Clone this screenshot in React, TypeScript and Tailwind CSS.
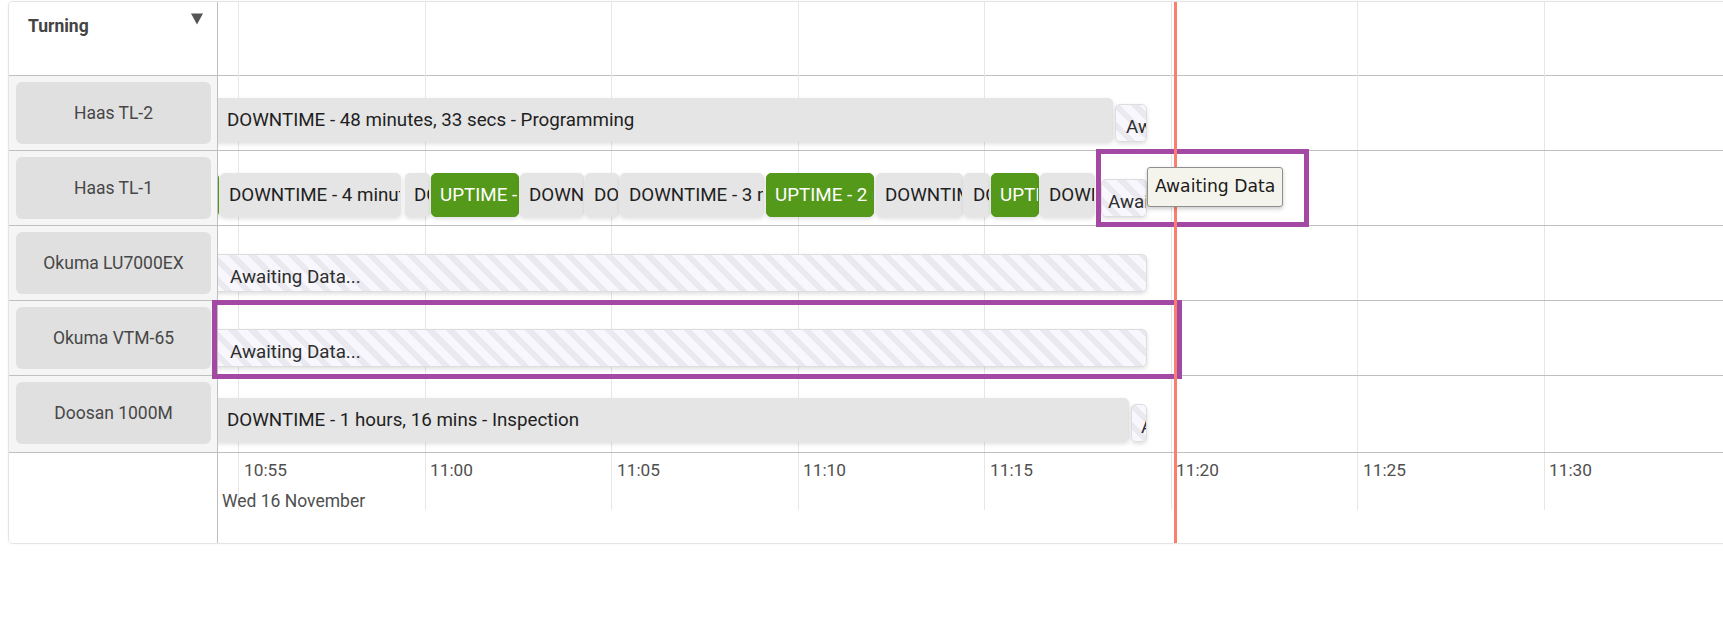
import React from "react";

type Kind = "down" | "up" | "await";
interface Item {
  left: number;
  width: number;
  kind: Kind;
  text: string;
  pl?: number;
}

const rows: { name: string; items: Item[] }[] = [
  {
    name: "Haas TL-2",
    items: [
      { left: -6, width: 901, kind: "down", text: "DOWNTIME - 48 minutes, 33 secs - Programming", pl: 14 },
      { left: 897, width: 32, kind: "await", text: "Awaiting Data...", pl: 10 },
    ],
  },
  {
    name: "Haas TL-1",
    items: [
      { left: -20, width: 21, kind: "up", text: "UPTIME" },
      { left: 2, width: 181, kind: "down", text: "DOWNTIME - 4 minutes, 12 secs - Idle", pl: 8 },
      { left: 187, width: 25, kind: "down", text: "DOWNTIME - 1 mins", pl: 8 },
      { left: 213, width: 88, kind: "up", text: "UPTIME - 2 mins, 5 secs", pl: 8 },
      { left: 302, width: 64, kind: "down", text: "DOWNTIME - 1 mins", pl: 8 },
      { left: 367, width: 34, kind: "down", text: "DOWNTIME", pl: 8 },
      { left: 402, width: 144, kind: "down", text: "DOWNTIME - 3 mins, 40 secs - Idle", pl: 8 },
      { left: 548, width: 108, kind: "up", text: "UPTIME - 2 mins, 51 secs", pl: 8 },
      { left: 658, width: 87, kind: "down", text: "DOWNTIME - 2 mins", pl: 8 },
      { left: 746, width: 26, kind: "down", text: "DOWNTIME", pl: 8 },
      { left: 773, width: 48, kind: "up", text: "UPTIME - 1 mins", pl: 8 },
      { left: 822, width: 55, kind: "down", text: "DOWNTIME - 1 mins", pl: 8 },
      { left: 883, width: 46, kind: "await", text: "Awaiting Data...", pl: 6 },
    ],
  },
  {
    name: "Okuma LU7000EX",
    items: [{ left: -6, width: 935, kind: "await", text: "Awaiting Data...", pl: 17 }],
  },
  {
    name: "Okuma VTM-65",
    items: [{ left: -6, width: 935, kind: "await", text: "Awaiting Data...", pl: 17 }],
  },
  {
    name: "Doosan 1000M",
    items: [
      { left: -6, width: 917, kind: "down", text: "DOWNTIME - 1 hours, 16 mins - Inspection", pl: 14 },
      { left: 913, width: 16, kind: "await", text: "Awaiting Data...", pl: 9 },
    ],
  },
];

const TICK0 = 20;
const STEP = 186.55;
const ticks = ["10:55", "11:00", "11:05", "11:10", "11:15", "11:20", "11:25", "11:30", "11:35"];

function ItemBox({ it }: { it: Item }) {
  const pos = { left: it.left, width: it.width, paddingLeft: it.pl ?? 9 };
  if (it.kind === "await") {
    return (
      <div
        className="absolute top-[28px] h-[38px] overflow-hidden whitespace-nowrap rounded-[5px] border border-[#dddddd] bg-[repeating-linear-gradient(45deg,#f8f7fd_0px,#f8f7fd_8px,#eae9f0_8px,#eae9f0_14px)] pt-[11px] text-[18.75px] leading-[22px] text-[#2e2e2e] shadow-[0_2px_4px_rgba(0,0,0,0.13)]"
        style={pos}
      >
        {it.text}
      </div>
    );
  }
  if (it.kind === "up") {
    return (
      <div
        className="absolute top-[22px] h-[44px] overflow-hidden whitespace-nowrap rounded-[5px] border border-[#54991a] bg-[#55991b] pt-[10px] text-[18.75px] leading-[22px] text-white shadow-[0_2px_4px_rgba(0,0,0,0.13)]"
        style={pos}
      >
        {it.text}
      </div>
    );
  }
  return (
    <div
      className="absolute top-[22px] h-[44px] overflow-hidden whitespace-nowrap rounded-[5px] border border-[#e5e5e5] bg-[#e5e5e5] pt-[10px] text-[18.75px] leading-[22px] text-[#1f1f1f] shadow-[0_2px_4px_rgba(0,0,0,0.13)]"
      style={pos}
    >
      {it.text}
    </div>
  );
}

export default function App() {
  return (
    <div className="relative h-[640px] w-full overflow-hidden bg-white pl-[8px] pt-px font-['Roboto',sans-serif]">
      <div className="flex h-[543px] w-[1800px] overflow-hidden rounded-[5px] border border-[#e4e4e4] bg-white shadow-[0_0_3px_rgba(0,0,0,0.05)]">
        {/* Left panel */}
        <div className="flex w-[209px] shrink-0 flex-col border-r border-[#bfbfbf]">
          <div className="flex h-[74px] items-start justify-between border-b border-[#bfbfbf] bg-white pl-[19px] pr-[14px]">
            <span className="pt-[14px] text-[17.5px] font-bold leading-[20px] text-[#444444]">Turning</span>
            <svg className="mt-[11px]" width="12" height="12" viewBox="0 0 12 12">
              <path d="M0 0.5 L12 0.5 L6 11.5 Z" fill="#555555" />
            </svg>
          </div>
          {rows.map((r, i) => (
            <div
              key={r.name}
              className={`${i === rows.length - 1 ? "h-[77px]" : "h-[75px]"} border-b border-[#bfbfbf] bg-[#f5f5f5] pt-[6px] pl-[7px] pr-[6px]`}
            >
              <div className="flex h-[62px] items-center justify-center rounded-[6px] bg-[#e0e0e0] text-[17.5px] text-[#474747]">
                {r.name}
              </div>
            </div>
          ))}
          <div className="flex-1 bg-white" />
        </div>

        {/* Right panel */}
        <div className="relative flex flex-1 flex-col overflow-hidden">
          <div className="pointer-events-none absolute left-0 top-0 h-[508px] w-full">
            {ticks.map((t, i) => (
              <div
                key={t}
                className="absolute top-0 h-full w-px bg-[#e6e6e6]"
                style={{ left: Math.round(TICK0 + i * STEP) }}
              />
            ))}
          </div>
          <div className="h-[74px] border-b border-[#bfbfbf]" />
          {rows.map((r, i) => (
            <div
              key={r.name}
              className={`relative ${i === rows.length - 1 ? "h-[77px]" : "h-[75px]"} border-b border-[#bfbfbf]`}
            >
              {r.items.map((it, j) => (
                <ItemBox key={j} it={it} />
              ))}
            </div>
          ))}
          <div className="relative flex-1">
            {ticks.map((t, i) => (
              <span
                key={t}
                className="absolute top-[7px] text-[17.3px] leading-[20px] text-[#4f4f4f]"
                style={{ left: Math.round(TICK0 + i * STEP + 5.5) }}
              >
                {t}
              </span>
            ))}
            <span className="absolute left-[4px] top-[38px] text-[17.5px] leading-[20px] text-[#4f4f4f]">
              Wed 16 November
            </span>
          </div>
          <div className="absolute bottom-0 left-[956px] top-0 z-10 w-[3px] bg-[#f9806f]" />
        </div>
      </div>

      {/* Annotation boxes */}
      <div className="absolute left-[1096px] top-[149px] h-[78px] w-[213px] border-[5px] border-[#a349a4]" />
      <div className="absolute left-[212px] top-[300px] h-[79px] w-[970px] border-[5px] border-[#a349a4]" />

      {/* Tooltip */}
      <div className="absolute left-[1147px] top-[167px] z-20 flex h-[40px] w-[136px] items-center rounded-[3px] border border-[#8f8f8f] bg-[#f5f4ec] pl-[7px] font-['DejaVu_Sans',sans-serif] text-[17.2px] text-[#1a1a1a] shadow-[0_2px_4px_rgba(0,0,0,0.2)]">
        Awaiting Data
      </div>
    </div>
  );
}
